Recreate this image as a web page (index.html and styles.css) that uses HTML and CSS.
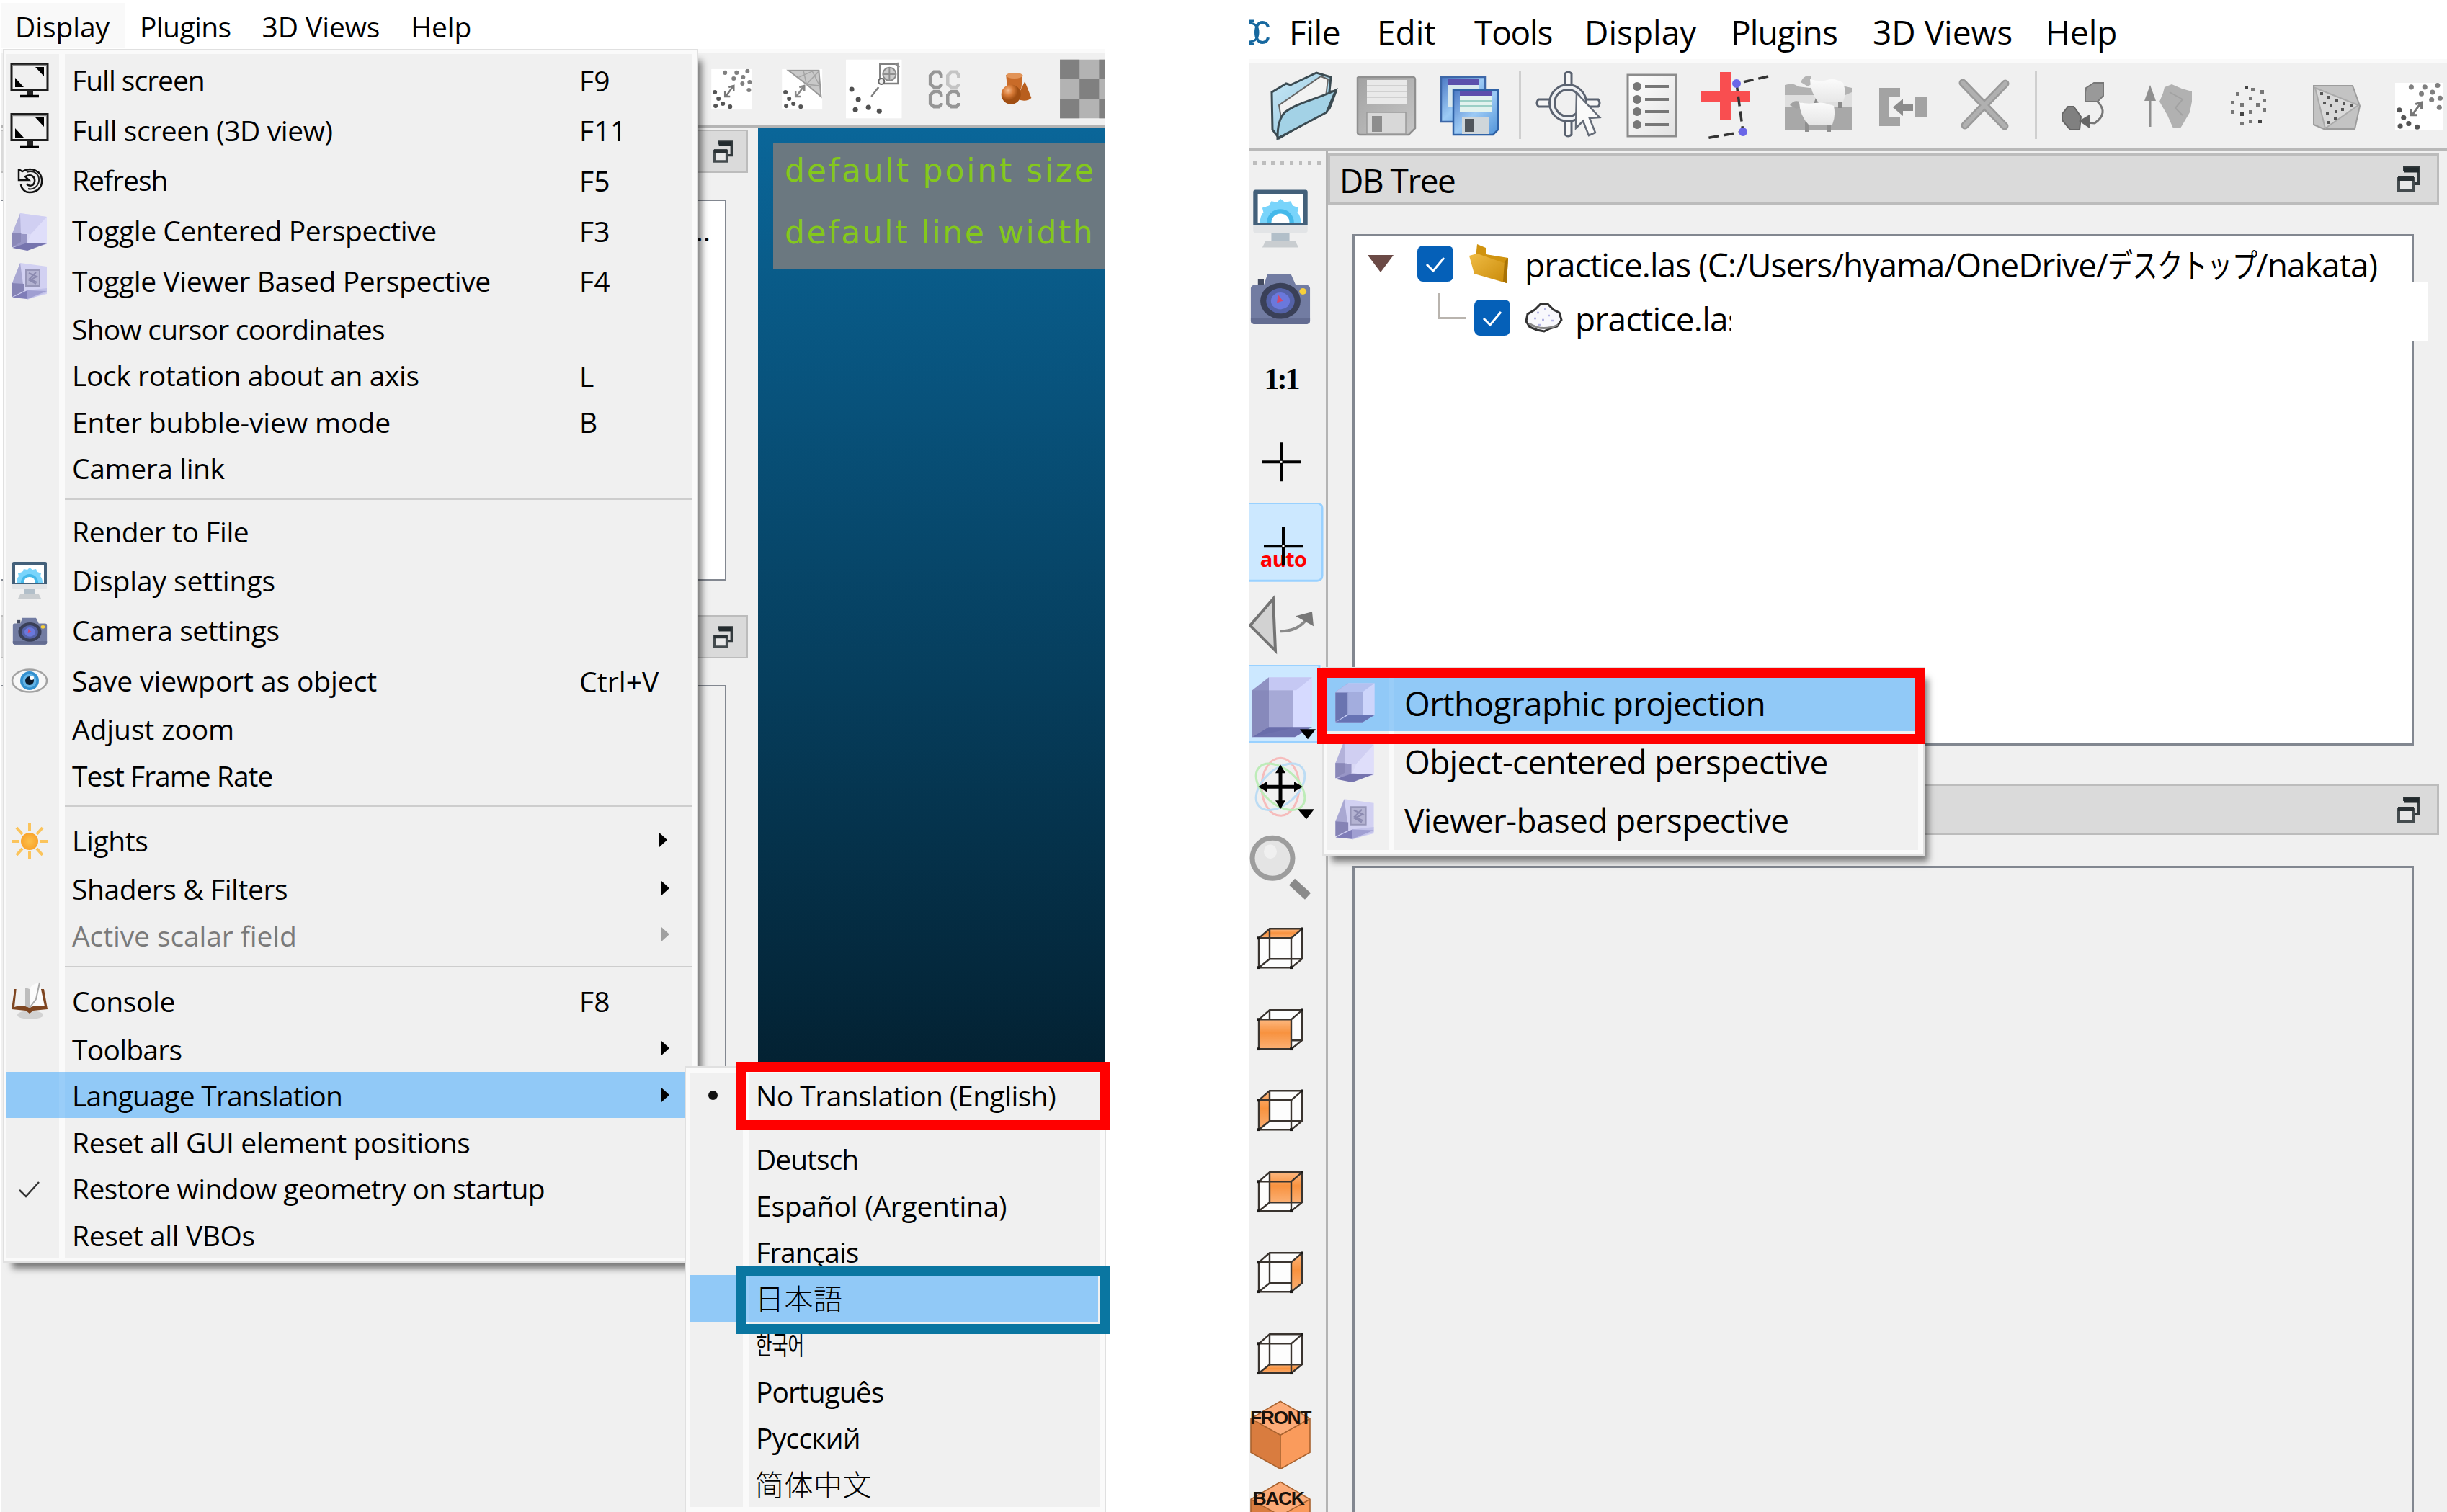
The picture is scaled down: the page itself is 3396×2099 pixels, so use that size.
FILE: index.html
```html
<!DOCTYPE html>
<html lang="en">
<head>
<meta charset="utf-8">
<title>CloudCompare</title>
<link rel="stylesheet" href="styles.css">
</head>
<body>
<svg class="defs" width="0" height="0">
  <defs>
    <linearGradient id="orange" x1="0" y1="0" x2="0" y2="1"><stop offset="0" stop-color="#fdb880"/><stop offset=".45" stop-color="#f8923f"/><stop offset="1" stop-color="#fbb074"/></linearGradient>
    <linearGradient id="greyMetal" x1="0" y1="0" x2="1" y2="1"><stop offset="0" stop-color="#a2a2a2"/><stop offset="1" stop-color="#c6c6c6"/></linearGradient>
    <linearGradient id="blueDisk" x1="0" y1="0" x2="1" y2="1"><stop offset="0" stop-color="#4a78c4"/><stop offset=".5" stop-color="#9ccaf5"/><stop offset="1" stop-color="#4f92d8"/></linearGradient>
    <linearGradient id="folderBlue" x1="0" y1="0" x2="1" y2="1"><stop offset="0" stop-color="#c8e8f6"/><stop offset="1" stop-color="#8cc1dc"/></linearGradient>
    <linearGradient id="folderGold" x1="0" y1="0" x2="1" y2="1"><stop offset="0" stop-color="#f0bc45"/><stop offset="1" stop-color="#c98a08"/></linearGradient>
    <radialGradient id="sun"><stop offset="0" stop-color="#fdc04a"/><stop offset="1" stop-color="#f9a42c"/></radialGradient>
    <radialGradient id="copper" cx=".35" cy=".3"><stop offset="0" stop-color="#f5bd90"/><stop offset=".5" stop-color="#d97c38"/><stop offset="1" stop-color="#a04e12"/></radialGradient>
    <linearGradient id="sheet" x1="0" y1="0" x2="1" y2="1"><stop offset="0" stop-color="#fff"/><stop offset="1" stop-color="#e2e2e2"/></linearGradient>
    <linearGradient id="fleece" x1="0" y1="0" x2="0" y2="1"><stop offset="0" stop-color="#fbfbfb"/><stop offset="1" stop-color="#e6e6e6"/></linearGradient>

    <symbol id="i-monitor" viewBox="0 0 56 56"><path d="M3 5.500h50v36H3z" fill="#f0f0f0" stroke="#1c1c1c" stroke-width="3"/><path d="M4.500 7.500h47" stroke="#888" stroke-width="1.500"/><path d="M36 10h12v13zM8 25l12 13H8z" fill="#000"/><path d="M24 42h9v8h-9z" fill="#222"/><path d="M15 50.500h26" stroke="#000" stroke-width="3.500"/></symbol>
    <symbol id="i-refresh" viewBox="0 0 56 56"><path d="M13 12v15h14l-5-5c8-4 14 0 13 7s-8 7-11 3" fill="none" stroke="#111" stroke-width="2.500"/><path d="M13 12l5 3c12-7 26-1 27 11s-7 18-17 18c-6 0-11-4-12-11" fill="none" stroke="#111" stroke-width="2.500"/><path d="M24 16c11-4 18 4 17 12s-8 13-15 11" fill="none" stroke="#222" stroke-width="2"/></symbol>
    <symbol id="i-cubec" viewBox="0 0 56 56"><path d="M15 3l37 5v38L25 53 4 50V31z" fill="#d9d8f5"/><path d="M15 3L4 31v19l14-9V31z" fill="#b3b2da"/><path d="M4 31l20 1 0 14-20 4z" fill="#9896c6"/><path d="M4 31l12 0 0 12-12 7z" fill="#8a88b8"/><path d="M15 3l37 5-22 24-14-1z" fill="#d0cff2"/><path d="M52 8L30 32l-6 14 28-2z" fill="#dfdefa"/><path d="M4 51l21-7 27 1-27 10z" fill="#7674ae"/></symbol>
    <symbol id="i-cubev" viewBox="0 0 56 56"><path d="M15 3l37 5v38L25 53 4 50V31z" fill="#d2d1f2"/><path d="M15 3L4 31v19l16-10z" fill="#a9a8d2"/><path d="M4 31l16 1 0 10-16 8z" fill="#8583b5"/><path d="M4 51l21-10 27 1-27 11z" fill="#7f7db8"/><path d="M25 41l27-3v6l-27 10z" fill="#b6b5e2" opacity=".6"/><path d="M23 13h19v22H23z" fill="#b4b3d2" stroke="#9796b8" stroke-width="2"/><path d="M27 17l11 5-10 5 9 5M37 16l-9 9 10 5" stroke="#8b8ab0" stroke-width="2" fill="none"/></symbol>
    <symbol id="i-cubeo" viewBox="0 0 56 56"><path d="M4 15L20 4h33v40L38 53H4z" fill="#cdd5fb"/><path d="M4 15L20 4v38L4 53z" fill="#8488bd"/><path d="M4 15h34v29H4z" fill="#9ba6d8" opacity=".85"/><path d="M4 53l16-9h33L38 53z" fill="#5c68ac" opacity=".9"/><path d="M4 15L20 4h33L38 15z" fill="#b4c0ef"/><path d="M4 16h15v27L4 52z" fill="#6a74b0"/></symbol>
    <symbol id="i-display" viewBox="0 0 56 56"><path d="M6 2h44a2 2 0 0 1 2 2v29H4V4a2 2 0 0 1 2-2z" fill="#43607a"/><path d="M8 6h40v25H8z" fill="#fff"/><path d="M10 31c0-4 1-7 3-9l-1-4 6-2 2-4 5 1 3-3 4 3 5-1 2 4 5 2-1 4c2 2 3 5 3 9z" fill="#79d4fb"/><path d="M16 31a12 12 0 0 1 24 0z" fill="#45b9ea"/><path d="M20 31a8 8 0 0 1 16 0z" fill="#fff"/><path d="M4 33h48v5a2 2 0 0 1-2 2H6a2 2 0 0 1-2-2z" fill="#e2e4e6"/><path d="M20 40h16v7H20z" fill="#b2bfc9"/><path d="M15 47h26l3 6H12z" fill="#c9cdd0"/></symbol>
    <symbol id="i-camera" viewBox="0 0 56 56" preserveAspectRatio="none"><path d="M9 10h5v6H9z" fill="#444b60"/><path d="M17 6h20l4 10h9a3 3 0 0 1 3 3v31a3 3 0 0 1-3 3H6a3 3 0 0 1-3-3V19a3 3 0 0 1 3-3h8z" fill="#727ca2"/><path d="M3 47h50v3a3 3 0 0 1-3 3H6a3 3 0 0 1-3-3z" fill="#636c91"/><circle cx="28" cy="31" r="17" fill="#3a4058"/><circle cx="28" cy="31" r="12" fill="#5462a8"/><circle cx="28" cy="31" r="8" fill="#6a78dc"/><path d="M26 25l4 6-5 2z" fill="#d3486f"/><circle cx="47" cy="22" r="3" fill="#f6cf3b"/></symbol>
    <symbol id="i-eye" viewBox="0 0 56 56"><ellipse cx="28" cy="28" rx="24" ry="15.500" fill="#f7f7f7" stroke="#a2a2a2" stroke-width="2.500"/><circle cx="28" cy="28" r="13" fill="#3390cf"/><circle cx="28" cy="28" r="9.500" fill="#62b3e6"/><circle cx="28" cy="28" r="6" fill="#0b1a2b"/><circle cx="31" cy="24" r="3" fill="#fff"/></symbol>
    <symbol id="i-sun" viewBox="0 0 56 56"><circle cx="28" cy="28" r="12" fill="url(#sun)"/><path d="M28 3v11M28 42v11M3 28h11M42 28h11M10 9l8 9M38 38l8 9M46 9l-8 9M18 38l-8 9" stroke="#fbc45c" stroke-width="4" fill="none"/></symbol>
    <symbol id="i-book" viewBox="0 0 56 56"><ellipse cx="29" cy="47" rx="18" ry="6" fill="#d2d2d2"/><path d="M7 11L3 39l20 2 5 4 5-4 20-2-5-28z" fill="#7e4520"/><path d="M10 8c6-2 13-1 18 3v26c-6-3-14-3-21-1z" fill="#f1f1f1"/><path d="M28 11v26l-6-2V9z" fill="#bdbdbd"/><path d="M28 11c2-5 8-8 14-9l7 33c-8-2-16-1-21 2z" fill="#fbfbfb"/><path d="M28 37l9-12 5-23" stroke="#a8a8a8" stroke-width="2" fill="none"/></symbol>
    <symbol id="i-check" viewBox="0 0 56 56"><path d="M14 29l9 9L41 18" fill="none" stroke="#333" stroke-width="2.500"/></symbol>
    <symbol id="i-float" viewBox="0 0 32 36"><path d="M10 6V2h20v22h-6" fill="none" stroke="#333a3d" stroke-width="4"/><path d="M9 5h21" stroke="#222a2d" stroke-width="7"/><path d="M2 17h20v17H2z" fill="#e8e8e8" stroke="#444b4e" stroke-width="4"/><path d="M1 17h22" stroke="#2a3134" stroke-width="6"/></symbol>
    <symbol id="i-c2c" viewBox="0 0 56 56"><path d="M0 0h56v56H0z" fill="#fff"/><g fill="#555"><circle cx="5" cy="32" r="3"/><circle cx="10" cy="41" r="3"/><circle cx="6" cy="51" r="3"/><circle cx="16" cy="48" r="3"/><circle cx="26" cy="52" r="3"/></g><g fill="#808080"><circle cx="19" cy="5" r="3"/><circle cx="35" cy="5" r="3"/><circle cx="50" cy="3" r="3"/><circle cx="31" cy="13" r="3"/><circle cx="44" cy="11" r="3"/><circle cx="43" cy="20" r="3"/><circle cx="53" cy="18" r="3"/><circle cx="52" cy="29" r="3"/></g><path d="M20 38l10-14M19 31v7h7M24 25l7-2 0 8" fill="none" stroke="#777" stroke-width="2.500"/></symbol>
    <symbol id="i-c2m" viewBox="0 0 56 56"><path d="M0 0h56v56H0z" fill="#fff"/><g fill="#555"><circle cx="5" cy="32" r="3"/><circle cx="10" cy="41" r="3"/><circle cx="6" cy="51" r="3"/><circle cx="16" cy="48" r="3"/><circle cx="26" cy="52" r="3"/></g><path d="M9 2h42l3 36-20-17z" fill="#c9c9c9" stroke="#999" stroke-width="2"/><path d="M22 12l20-9 10 20-18-2-4-18M34 21l18-19" fill="none" stroke="#a5a5a5" stroke-width="1.500"/><path d="M20 38l10-14M19 31v7h7M24 25l7-2 0 8" fill="none" stroke="#888" stroke-width="2.500"/></symbol>
    <symbol id="i-wire" viewBox="0 0 64 58"><path d="M2 15L18 2h44v42L46 56H2z" fill="#fdfdfd"/></symbol>
    <symbol id="i-edges" viewBox="0 0 64 58"><path d="M2 15L17 2h45v42L47 56H2zM2 15h45v41M47 15L62 2" fill="none" stroke="#3a342f" stroke-width="2.400"/><path d="M0 54h4v4H0zM45 54h4v4h-4zM60 0h4v4h-4zM0 13h4v4H0z" fill="#1c1a18"/></symbol>
    <symbol id="i-back" viewBox="0 0 64 58"><path d="M17 2v42h45M2 56l15-12" fill="none" stroke="#3a342f" stroke-width="2.400"/></symbol>
    <symbol id="i-iso" viewBox="0 0 86 96"><path d="M43 1L2 25v47l41 23 41-23V25z" fill="#fa9b5c"/><path d="M43 1L2 25l41 23 41-23z" fill="#fcab78"/><path d="M2 25v47l41 23V48z" fill="#d97c3f"/><path d="M43 1L2 25v47l41 23 41-23V25zM2 25l41 23 41-23M43 48v47" fill="none" stroke="#a8622f" stroke-width="1.600"/></symbol>
    <symbol id="i-tick" viewBox="0 0 50 50"><rect width="50" height="50" rx="8" fill="#0560b8"/><path d="M13 26l9 9 15-18" fill="none" stroke="#fff" stroke-width="3"/></symbol>
  </defs>
</svg>

<main class="page">
  <section class="window left">
    <nav class="menubar small">
      <span class="open">Display</span><span class="m-plugins">Plugins</span><span>3D Views</span><span>Help</span>
    </nav>
    <div class="toolbar narrow">
      <svg viewBox="-49 -49 98 98"><use href="#i-c2c" x="-28" y="-27" width="56" height="56"/></svg>
      <svg viewBox="-49 -49 98 98"><use href="#i-c2m" x="-28" y="-27" width="56" height="56"/></svg>
      <svg viewBox="-49 -49 98 98"><path d="M-38-40h77v81h-77z" fill="#fff"/><g fill="#505050"><circle cx="-30" cy="1" r="3.500"/><circle cx="-21" cy="15" r="3.500"/><circle cx="-25" cy="29" r="3.500"/><circle cx="-7" cy="26" r="3.500"/><circle cx="8" cy="31" r="3.500"/></g><path d="M9-34h25v27H9zM-3 11L7-2" fill="none" stroke="#808080" stroke-width="2.500"/><circle cx="22" cy="-20" r="9" fill="#ccc" stroke="#8a8a8a" stroke-width="2"/><path d="M22-29v18M13-20h18M30-34l6 4M34-36v10" stroke="#8f8f8f" stroke-width="2"/><circle cx="11" cy="-10" r="4" fill="#eee" stroke="#666" stroke-width="2"/></svg>
      <svg viewBox="-49 -49 98 98"><g fill="none" stroke="#969696" stroke-width="4.500"><path d="M-4-15v-4l-3-4h-7l-5 5v12l5 4h7l3-3v-2"/><path d="M20-15v-4l-3-4h-7l-5 5v12l5 4h7l3-3v-2" stroke="#c4c4c4"/><path d="M-4 12V8l-3-4h-7l-5 5v12l5 4h7l3-3v-2M20 12V8l-3-4h-7L5 9v12l5 4h7l3-3v-2"/></g></svg>
      <svg viewBox="-49 -49 98 98"><path d="M13-10L2 12c2 6 16 6 20 1z" fill="#b85e1e"/><path d="M-13-19l2 20H8l2-20z" fill="#c96b28"/><ellipse cx="-1.500" cy="-18" rx="11.500" ry="4" fill="#e29458"/><circle cx="-6" cy="8" r="13.500" fill="url(#copper)"/></svg>
      <svg viewBox="-49 -49 98 98"><path d="M-36-40h85v81h-85z" fill="#b3b3b3"/><path d="M-36-40h27v27h-27zM18-40h31v27H18zM-9-13h27v27H-9zM-36 14h27v27h-27zM18 14h31v27H18z" fill="#808080"/></svg>
    </div>
    <div class="split">
      <div class="docks">
        <div class="docktitle"><svg class="float"><use href="#i-float"/></svg></div>
        <div class="dockbox white"><span>..</span></div>
        <div class="docktitle"><svg class="float"><use href="#i-float"/></svg></div>
        <div class="dockbox grow"></div>
      </div>
      <div class="view3d">
        <div class="hud"><p>default point size</p><p class="second">default line width</p></div>
      </div>
    </div>

    <div class="menu main">
      <ul class="items">
        <li class="tall"><svg><use href="#i-monitor"/></svg><b class="tight">Full screen</b><kbd>F9</kbd></li>
        <li class="tall"><svg><use href="#i-monitor"/></svg><b>Full screen (3D view)</b><kbd>F11</kbd></li>
        <li class="tall"><svg><use href="#i-refresh"/></svg><b class="tight">Refresh</b><kbd>F5</kbd></li>
        <li class="tall"><svg><use href="#i-cubec"/></svg><b>Toggle Centered Perspective</b><kbd>F3</kbd></li>
        <li class="tall"><svg><use href="#i-cubev"/></svg><b>Toggle Viewer Based Perspective</b><kbd>F4</kbd></li>
        <li><b class="snug">Show cursor coordinates</b></li>
        <li><b>Lock rotation about an axis</b><kbd>L</kbd></li>
        <li><b class="loose">Enter bubble-view mode</b><kbd>B</kbd></li>
        <li><b>Camera link</b></li>
        <li class="sep"></li>
        <li><b>Render to File</b></li>
        <li class="tall"><svg><use href="#i-display"/></svg><b class="loose">Display settings</b></li>
        <li class="tall cam"><svg><use href="#i-camera"/></svg><b>Camera settings</b></li>
        <li class="tall"><svg><use href="#i-eye"/></svg><b class="loose">Save viewport as object</b><kbd>Ctrl+V</kbd></li>
        <li><b class="loose">Adjust zoom</b></li>
        <li><b class="tight">Test Frame Rate</b></li>
        <li class="sep"></li>
        <li class="tall"><svg><use href="#i-sun"/></svg><b>Lights</b><i class="arrow near"></i></li>
        <li><b>Shaders &amp; Filters</b><i class="arrow"></i></li>
        <li class="off"><b class="loose">Active scalar field</b><i class="arrow"></i></li>
        <li class="sep"></li>
        <li class="tall"><svg><use href="#i-book"/></svg><b>Console</b><kbd>F8</kbd></li>
        <li><b class="snug">Toolbars</b><i class="arrow"></i></li>
        <li class="hot"><b class="snug">Language Translation</b><i class="arrow"></i></li>
        <li><b>Reset all GUI element positions</b></li>
        <li><svg><use href="#i-check"/></svg><b class="mid">Restore window geometry on startup</b></li>
        <li><b>Reset all VBOs</b></li>
      </ul>
    </div>

    <div class="menu lang">
      <ul class="items">
        <li><i class="dot"></i><b class="mid">No Translation (English)</b></li>
        <li class="sep"></li>
        <li><b class="tight">Deutsch</b></li>
        <li><b class="mild">Español (Argentina)</b></li>
        <li><b class="tight">Français</b></li>
        <li class="hot cjk"><b>日本語</b></li>
        <li class="ko"><b>한국어</b></li>
        <li><b class="tight">Português</b></li>
        <li><b class="snug">Русский</b></li>
        <li class="cjk sc"><b>简体中文</b></li>
      </ul>
    </div>
    <div class="frame f-english"></div>
    <div class="frame f-japanese"></div>
  </section>

  <section class="window right">
    <nav class="menubar big">
      <svg class="logo" viewBox="0 0 28 40"><g fill="none" stroke="#17689f" stroke-width="4"><path d="M0 7c10 0 13 6 13 13S10 33 0 33" stroke-width="3"/><path d="M27 13c-1-5-4-7-8-7-6 0-9 6-9 14s3 14 9 14c4 0 7-2 8-7"/><path d="M0 4h8M0 36h8" stroke-width="3"/></g></svg>
      <span class="g1">File</span><span class="g2">Edit</span><span class="g3">Tools</span><span class="g4">Display</span><span class="g5">Plugins</span><span class="g6">3D Views</span><span class="g7">Help</span>
    </nav>
    <div class="toolbar wide">
      <svg viewBox="0 0 96 96"><path d="M4 30l20-12 6 2L66 3l20 6-2 20 9 0-9 24L14 94 5 82z" fill="url(#folderBlue)" stroke="#3b4b52" stroke-width="3"/><path d="M14 48L72 8l10 4-4 32-58 40z" fill="#f2f2f2" stroke="#666" stroke-width="2"/><path d="M22 58c18-14 44-18 71-31L80 58 12 94c0-16 2-27 10-36z" fill="#a3d2e6" stroke="#3b4b52" stroke-width="3"/></svg>
      <svg viewBox="0 0 96 96"><path d="M8 9h76a3 3 0 0 1 3 3v68l-9 9H10a3 3 0 0 1-3-3V10z" fill="url(#greyMetal)" stroke="#8f8f8f" stroke-width="2.500"/><path d="M20 13h56v34H20z" fill="#e9e9e9"/><path d="M20 21h56M20 29h56M20 37h56" stroke="#d0d0d0" stroke-width="2"/><path d="M20 58h54v30H20z" fill="#d8d8d8" stroke="#999" stroke-width="1.500"/><path d="M27 63h14v22H27z" fill="#8d8d8d"/></svg>
      <svg viewBox="0 0 96 96"><path d="M7 9h61v62H7z" fill="url(#blueDisk)" stroke="#3d67a8" stroke-width="2.500"/><path d="M16 11h44v9H16z" fill="#5b50ac"/><path d="M16 20h44v30H16z" fill="#d8e8ee"/><path d="M24 27h62v55l-7 7H24z" fill="url(#blueDisk)" stroke="#2f62a6" stroke-width="2.500"/><path d="M33 29h44v6H33z" fill="#5b50ac"/><path d="M33 35h44v22H33z" fill="#e3f2ee"/><path d="M33 42h44M33 49h44" stroke="#9ccfc6" stroke-width="2"/><path d="M36 64h38v24H36z" fill="#cfd6da"/><path d="M40 67h12v18H40z" fill="#50565c"/></svg>
      <hr class="vsep">
      <svg viewBox="0 0 96 96"><g fill="#f6f6f6" stroke="#5a6270" stroke-width="3"><path d="M43 4q4-4 9 0v21h-9zM43 66h9v23q-5 4-9 0zM6 40h22v10H6q-4-5 0-10zM66 40h23q4 5 0 10H66z"/></g><circle cx="47" cy="45" r="22" fill="none" stroke="#5a6270" stroke-width="10"/><circle cx="47" cy="45" r="22" fill="none" stroke="#eef0f3" stroke-width="4"/><path d="M59 31l32 34-14 1 8 20-9 4-8-20-10 10z" fill="#fafafa" stroke="#646b77" stroke-width="2.500"/></svg>
      <svg viewBox="0 0 96 96"><path d="M14 6h67v85H14z" fill="url(#sheet)" stroke="#8c8c8c" stroke-width="3"/><g fill="#777"><circle cx="27" cy="22" r="6"/><circle cx="27" cy="40" r="6"/><circle cx="27" cy="57" r="6"/><circle cx="27" cy="75" r="6"/></g><path d="M38 22h33M38 40h33M38 57h33M38 75h33" stroke="#777" stroke-width="4"/></svg>
      <svg viewBox="0 0 96 96"><path d="M26 2h15v26h26v15H41v26H26V43H0V28h26z" fill="#f94e50"/><path d="M93 8L49 18l9 67-52 9" fill="none" stroke="#333" stroke-width="3.500" stroke-dasharray="14 7"/><circle cx="49" cy="18" r="6" fill="#6a66e8"/><circle cx="58" cy="85" r="6" fill="#6a66e8"/></svg>
      <svg viewBox="0 0 96 96"><path d="M0 20q12-4 18 2l16 2 50-2 9 2v58H0z" fill="#b2b2b2"/><path d="M0 34h36l48 0 9-4v20H0z" fill="#dedede"/><path d="M0 50h93v32H0z" fill="#a8a8a8"/><path d="M22 16q5-11 14-8l2 10-6 4z" fill="#b4b4b4"/><path d="M46 38l-3 9M77 40v12" stroke="#8a8a8a" stroke-width="6"/><path d="M35 12q14 4 24 1t22 4q5 14 0 26l-34 2q-12-16-12-33z" fill="url(#fleece)"/><path d="M7 48q6-9 16-4l1 6-8 3z" fill="#a2a2a2"/><path d="M31 72v13M61 72v13" stroke="#8f8f8f" stroke-width="6"/><path d="M20 44q12 3 22 1t26 4q3 14-2 26H33q-12-12-13-31z" fill="url(#fleece)"/></svg>
      <svg viewBox="0 0 96 96"><path d="M15 24h29v13H28v27h16v13H15zM65 36h16v29H65z" fill="#a3a3a3"/><path d="M34 51l14-12v7h14v10H48v7z" fill="#8c8c8c"/></svg>
      <svg viewBox="0 0 96 96"><path d="M15 17L73 77M74 18L18 76" stroke="#9a9a9a" stroke-width="11" stroke-linecap="round"/><path d="M15 17L73 77M74 18L18 76" stroke="#b0b0b0" stroke-width="6" stroke-linecap="round"/></svg>
      <hr class="vsep two">
      <svg viewBox="0 0 96 96"><path d="M50 24l11-7h13v18l-8 8H49V30z" fill="#999" stroke="#777" stroke-width="2"/><path d="M17 60l8-10h8l10 14-2 18H28l-11-13z" fill="#808080" stroke="#666" stroke-width="2"/><path d="M66 43q16 16-4 30l-12-1" fill="none" stroke="#777" stroke-width="3"/><path d="M40 70l15-9v19z" fill="#666"/></svg>
      <svg viewBox="0 0 96 96"><path d="M23 78V30" stroke="#8f8f8f" stroke-width="3"/><path d="M15 42l8-22 8 22z" fill="#8f8f8f"/><path d="M43 23l10-4 14 6 14 4v14l-3 15-13 22H55l-8-18-11-19 5-12z" fill="#b1b1b1"/><path d="M50 30l18 10-10 12 10 10" stroke="#a2a2a2" stroke-width="2" fill="none"/></svg>
      <svg viewBox="0 0 96 96"><g fill="#777"><path d="M19 42h5v5h-5zM19 55h5v5h-5zM26 30h5v5h-5zM32 45h5v5h-5zM44 36h5v5h-5zM47 24h5v5h-5zM54 45h5v5h-5zM60 27h5v5h-5zM63 39h5v5h-5zM63 52h5v5h-5zM44 55h5v5h-5zM44 68h5v5h-5zM32 71h5v5h-5z"/><path d="M38 21h5v5h-5zM32 58h5v5h-5zM57 68h5v5h-5z" fill="#444"/></g></svg>
      <svg viewBox="0 0 96 96"><path d="M18 21h54l10 28-7 32H32l-14-6z" fill="#c3c3c3" stroke="#9c9c9c" stroke-width="2"/><path d="M20 24l60 24-46 32z" fill="#d9d9d9" stroke="#aaa" stroke-width="2"/><path d="M27 30h4v4h-4zM37 35h4v4h-4zM31 43h4v4h-4zM48 40h4v4h-4zM40 47h4v4h-4zM58 44h4v4h-4zM68 46h4v4h-4zM35 57h4v4h-4zM47 55h4v4h-4zM56 52h4v4h-4zM37 70h4v4h-4zM46 64h4v4h-4z" fill="#555"/></svg>
      <svg viewBox="0 0 96 96"><use href="#i-c2c" x="15" y="17" width="66" height="66"/></svg>
    </div>
    <div class="work">
      <aside class="sidebar">
        <svg viewBox="0 -56.300 108 112.600"><use href="#i-display" x="-2" y="-44" width="92" height="88"/></svg>
        <svg viewBox="0 -56.300 108 112.600"><use href="#i-camera" x="-2" y="-44" width="92" height="82"/></svg>
        <svg viewBox="0 -56.300 108 112.600"><text x="45" y="11" class="one">1:1</text></svg>
        <svg viewBox="0 -56.300 108 112.600"><path d="M45-27v54M18 0h54" stroke="#000" stroke-width="4"/><path d="M43.500-1.500h3v3h-3z" fill="#fff"/></svg>
        <svg viewBox="0 -56.300 108 112.600"><path d="M-4-56h99a7 7 0 0 1 7 7v94a7 7 0 0 1-7 7H-4z" fill="#cce8ff" stroke="#99d1ff" stroke-width="3"/><text x="48" y="33" class="auto">auto</text><path d="M48-23v54M21 4h54" stroke="#000" stroke-width="4"/><path d="M46.500 2.500h3v3h-3z" fill="#fff"/></svg>
        <svg viewBox="0 -56.300 108 112.600"><path d="M2 1l32-37 3 72z" fill="#d2d2d2" stroke="#747474" stroke-width="4"/><path d="M43 9c16 0 26-4 36-15" fill="none" stroke="#8a8a8a" stroke-width="4"/><path d="M65-12l23-6 2 20z" fill="#777"/></svg>
        <svg viewBox="0 -56.300 108 112.600"><path d="M-4-56H98V51H-4z" fill="#cce8ff" stroke="#99d1ff" stroke-width="3"/><path d="M5-21L28-39h60v64L66 44H5z" fill="#d6daff"/><path d="M5-21L28-39h60L66-21z" fill="#c5c8f3"/><path d="M5-21h57v52L5 44z" fill="#a6a9d6"/><path d="M5-21L28-39v70L5 44z" fill="#7c7fb2" opacity=".75"/><path d="M5 44l23-14h60L64 44z" fill="#6366a6" opacity=".9"/><path d="M71 33h22L82 47z" fill="#000"/></svg>
        <svg viewBox="0 -56.300 108 112.600"><g fill="none" stroke-width="3"><ellipse cx="44" cy="0" rx="26" ry="40" stroke="#f6bcbc"/><ellipse cx="44" cy="0" rx="40" ry="24" stroke="#bcdcf4" transform="rotate(-42 44 0)"/><ellipse cx="44" cy="0" rx="40" ry="24" stroke="#bdecb8" transform="rotate(42 44 0)"/></g><path d="M44-23v46M21 0h46" stroke="#000" stroke-width="5"/><path d="M44-31l7 12H37zM44 31l7-12H37zM13 0l12-7V7zM75 0L63-7V7z" fill="#000"/><path d="M68 31h23L80 45z" fill="#000"/></svg>
        <svg viewBox="0 -56.300 108 112.600"><path d="M60 20L82 40" stroke="#8a8a8a" stroke-width="12"/><circle cx="33" cy="-13" r="28" fill="#e4e4e4" stroke="#9d9d9d" stroke-width="7"/><ellipse cx="30" cy="-22" rx="9" ry="10" fill="#f0f0f0"/></svg>
        <svg viewBox="0 -56.300 108 112.600"><g transform="translate(12 -30)"><use href="#i-wire" width="64" height="58"/><path d="M2 15L17 2h45L47 15z" fill="url(#orange)"/><use href="#i-back" width="64" height="58"/><use href="#i-edges" width="64" height="58"/></g></svg>
        <svg viewBox="0 -56.300 108 112.600"><g transform="translate(12 -30)"><use href="#i-wire" width="64" height="58"/><use href="#i-back" width="64" height="58"/><path d="M2 15h45v41H2z" fill="url(#orange)"/><use href="#i-edges" width="64" height="58"/></g></svg>
        <svg viewBox="0 -56.300 108 112.600"><g transform="translate(12 -30)"><use href="#i-wire" width="64" height="58"/><path d="M2 15L17 2v42L2 56z" fill="url(#orange)"/><use href="#i-back" width="64" height="58"/><use href="#i-edges" width="64" height="58"/></g></svg>
        <svg viewBox="0 -56.300 108 112.600"><g transform="translate(12 -30)"><use href="#i-wire" width="64" height="58"/><path d="M17 2h45v42H17z" fill="url(#orange)"/><use href="#i-back" width="64" height="58"/><use href="#i-edges" width="64" height="58"/></g></svg>
        <svg viewBox="0 -56.300 108 112.600"><g transform="translate(12 -30)"><use href="#i-wire" width="64" height="58"/><use href="#i-back" width="64" height="58"/><path d="M47 15L62 2v42L47 56z" fill="url(#orange)"/><use href="#i-edges" width="64" height="58"/></g></svg>
        <svg viewBox="0 -56.300 108 112.600"><g transform="translate(12 -30)"><use href="#i-wire" width="64" height="58"/><path d="M2 56l15-12h45L47 56z" fill="url(#orange)"/><use href="#i-back" width="64" height="58"/><use href="#i-edges" width="64" height="58"/></g></svg>
        <svg viewBox="0 -56.300 108 112.600"><use href="#i-iso" x="1" y="-49" width="86" height="96"/><text x="44" y="-16" class="iso">FRONT</text></svg>
        <svg viewBox="0 -56.300 108 112.600"><use href="#i-iso" x="1" y="-49" width="86" height="96"/><text x="41" y="-16" class="iso">BACK</text></svg>
      </aside>
      <div class="panels">
        <div class="docktitle titled"><span>DB Tree</span><svg class="float"><use href="#i-float"/></svg></div>
        <div class="tree">
          <div class="node">
            <i class="expand"></i><svg class="cb"><use href="#i-tick"/></svg>
            <svg class="folder" viewBox="0 0 56 56"><path d="M12 1l12 5v9l31 5-2 35-45-16z" fill="#d0930f"/><path d="M1 17l11-3 40 14 1 27L8 42z" fill="url(#folderGold)"/><path d="M55 20l-2 35-5-2 2-28z" fill="#a87205"/></svg>
            <span class="label">practice.las (C:/Users/hyama/OneDrive/<span class="kana">デスクトップ</span>/nakata)</span>
          </div>
          <div class="node child">
            <i class="branch"></i><svg class="cb"><use href="#i-tick"/></svg>
            <svg class="cloud" viewBox="0 0 54 42"><path d="M15 10l8-8h10l8 8 8 4 3 10-6 9-10 3-8 4-10-2-10-4-5-8 2-10z" fill="#f8f8fc" stroke="#333" stroke-width="3"/><path d="M18 14h3M28 9h3M33 18h3M14 22h3M25 24h3M38 25h3M20 31h3" stroke="#b4b4e4" stroke-width="2.500"/><path d="M7 29q18 12 40 2" fill="none" stroke="#888" stroke-width="3"/></svg>
            <span class="label cut">practice.las</span>
          </div>
          <div class="patch"></div>
        </div>
        <div class="docktitle titled"><svg class="float"><use href="#i-float"/></svg></div>
        <div class="props"></div>
      </div>
    </div>

    <div class="menu proj">
      <ul class="items">
        <li class="hot"><svg><use href="#i-cubeo"/></svg><b>Orthographic projection</b></li>
        <li><svg><use href="#i-cubec"/></svg><b>Object-centered perspective</b></li>
        <li><svg><use href="#i-cubev"/></svg><b>Viewer-based perspective</b></li>
      </ul>
    </div>
    <div class="frame f-ortho"></div>
  </section>
</main>
</body>
</html>
```
FILE: styles.css
```css
* { box-sizing: border-box; }
body {
  margin: 0;
  background: #fff;
  color: #000;
  font-family: "Open Sans", "Noto Sans", "Noto Sans CJK JP", sans-serif;
}
ul, p { margin: 0; padding: 0; list-style: none; }
svg { display: block; flex: none; overflow: visible; }
b, kbd, i { font: inherit; }
.defs { position: absolute; }

.page {
  display: flex;
  width: 3396px;
  height: 2099px;
  overflow: hidden;
}
.window {
  position: relative;
  display: flex;
  flex-direction: column;
  flex: none;
  height: 2099px;
  background: #f0f0f0;
}
.left { width: 1532px; margin-left: 2px; }
.right { width: 1663px; margin-left: 199px; }

/* menu bars */
.menubar { display: flex; flex: none; background: #fff; white-space: nowrap; }
.small { height: 68px; font-size: 39px; line-height: 73px; letter-spacing: -.1px; }
.small span { margin-right: 43px; }
.small .open {
  width: 172px;
  height: 62px;
  margin: 4px 20px 0 0;
  padding-left: 19px;
  line-height: 65px;
  background: #f9f9f9;
}
.small .m-plugins { letter-spacing: -.6px; }
.big { height: 82px; font-size: 46px; line-height: 88px; }
.big span { flex: none; }
.logo { width: 28px; height: 40px; margin-top: 25px; }
.g1 { width: 122px; margin-left: 28px; letter-spacing: -.4px; }
.g2 { width: 135px; }
.g3 { width: 153px; letter-spacing: -1.200px; }
.g4 { width: 203px; }
.g5 { width: 197px; letter-spacing: -.9px; }
.g6 { width: 240px; }

/* tool bars */
.toolbar { display: flex; flex: none; overflow: hidden; }
.narrow {
  height: 109px;
  padding-left: 963.500px;
  border-top: 5px solid #fafafa;
  border-bottom: 4px solid #b4b4b4;
}
.narrow svg { width: 98.500px; height: 100px; }
.wide {
  height: 127px;
  padding: 10px 0 0 18px;
  border-top: 5px solid #fafafa;
  border-bottom: 3px solid #b8b8b8;
}
.wide svg { width: 96px; height: 96px; margin: 1px 10px 0; }
.vsep { flex: none; width: 3px; height: 94px; margin: 2px 8px 0 9px; border: 0; background: #cfcfcf; }
.vsep.two { margin: 2px 8px 0 9px; }

/* left window body */
.split { display: flex; flex: 1; min-height: 0; }
.docks { display: flex; flex-direction: column; width: 1050px; padding-top: 3px; }
.docktitle {
  display: flex;
  flex: none;
  align-items: center;
  justify-content: flex-end;
  background: #dadada;
  border: 3px solid #bcbcbc;
}
.docks .docktitle { width: 1036px; height: 60px; padding-right: 19px; border-width: 2px; border-left: 0; }
.float { width: 32px; height: 36px; }
.docks .float { width: 27px; height: 31px; }
.dockbox { flex: none; width: 1006px; border: 2px solid #828790; border-left: 0; }
.dockbox.white {
  height: 529px;
  margin: 37px 0 48px;
  padding: 14px 20px 0 0;
  background: #fff;
  font-size: 39px;
  text-align: right;
}
.dockbox.grow { flex: 1; margin-top: 37px; border-bottom: 0; }
.view3d { flex: 1; padding: 22px 0 0 21px; background: linear-gradient(#0a6699, #000 101%); }
.hud {
  height: 174px;
  padding: 10px 0 0 16px;
  background: #6b7880;
  color: #84c81c;
  font: 44px/56px "DejaVu Sans", sans-serif;
  letter-spacing: 2.850px;
  white-space: nowrap;
}
.hud p + p { margin-top: 30px; }
.hud .second { letter-spacing: 2.600px; }

/* pop-up menus lie over the windows */
.menu { position: absolute; background: #fafafa; border: 2px solid #e0e0e0; }
.items { background: linear-gradient(90deg, #f0f0f0 0 73px, #fafafa 73px 81px, #f0f0f0 81px); height: 100%; }
.items li {
  position: relative;
  display: flex;
  align-items: center;
  height: 64.500px;
  font-size: 39px;
  line-height: 66px;
  letter-spacing: -.4px;
  white-space: nowrap;
}
.items li.tall { height: 69.700px; line-height: 72px; }
.items li b { flex: none; padding-left: 91px; padding-top: 3px; }
.items li svg { width: 56px; height: 56px; margin: 4px -60px 0 4px; }
.items li.cam svg { width: 53px; height: 44px; margin: 2px -59px 0 6px; }
.items li .tight { letter-spacing: -1px; }
.items li .snug { letter-spacing: -.75px; }
.items li .mid { letter-spacing: -.55px; }
.items li .mild { letter-spacing: -.25px; }
.items li .loose { letter-spacing: -.1px; }
.items li kbd { position: absolute; left: 795px; top: 1px; letter-spacing: .1px; }
.items li.sep { height: 23.700px; }
.sep::after { content: ""; width: 100%; height: 2px; margin-left: 81px; background: #cdcdcd; }
.items li.hot { background: linear-gradient(90deg, #91c9f7 0 73px, #99cdf8 73px 81px, #91c9f7 81px); }
.items li.off { color: #7a7a7a; }
.arrow {
  margin-left: auto;
  margin-right: 31px;
  border: 10px solid transparent;
  border-left: 11px solid #000;
  border-right: 0;
}
.arrow.near { margin-right: 34px; }
.off .arrow { border-left-color: #a0a0a0; }

.main {
  left: 2px;
  top: 68px;
  width: 965px;
  height: 1685px;
  padding: 4.600px 7px 5px 3px;
  box-shadow: 9px 12px 9px -4px rgba(0, 0, 0, .5);
}
.lang {
  left: 948px;
  top: 1480px;
  width: 585px;
  height: 625px;
  padding: 6.500px 6px 11px 6px;
}
.lang .items li b { padding-top: 1px; }
.lang li.hot { margin-right: 3px; }
.lang li .dot { width: 13px; height: 13px; margin: 0 -38px 0 25px; border-radius: 50%; background: #111; }
.lang .items .cjk b { padding: 0 0 3px 90px; font-family: "Noto Sans CJK JP", sans-serif; font-weight: 300; font-size: 40px; line-height: 58px; letter-spacing: .5px; }
.lang .items .sc b { font-family: "Noto Sans CJK SC", sans-serif; }
.lang .items .ko b {
  font: 36px/58px "Noto Sans CJK KR", sans-serif;
  padding: 0 0 4px 91px;
  transform: scaleX(.68);
  transform-origin: 91px 50%;
}
.proj {
  left: 102px;
  top: 926px;
  width: 836px;
  height: 262px;
  padding: 6px 7px 6px 5px;
  box-shadow: 9px 12px 9px -4px rgba(0, 0, 0, .5);
}
.proj .items { background: linear-gradient(90deg, #f0f0f0 0 85px, #fafafa 85px 93px, #f0f0f0 93px); }
.proj .items li { height: 81.200px; font-size: 46px; line-height: 82px; letter-spacing: -.65px; }
.proj .items li.hot { background: linear-gradient(90deg, #91c9f7 0 85px, #99cdf8 85px 93px, #91c9f7 93px); }
.proj .items li svg { width: 62px; height: 62px; margin: 0 -69px 0 7px; }
.proj .items li b { padding-left: 107px; }

/* highlight frames */
.frame { position: absolute; border: 14px solid #f00; }
.f-english { left: 1019px; top: 1474px; width: 520px; height: 95px; }
.f-japanese { left: 1019px; top: 1757px; width: 520px; height: 95px; border-color: #0a76a1; }
.f-ortho { left: 95px; top: 927px; width: 843px; height: 106px; }

/* right window body */
.work { display: flex; flex: 1; min-height: 0; }
.sidebar {
  display: flex;
  flex-direction: column;
  flex: none;
  width: 110px;
  padding-top: 38.700px;
  overflow: hidden;
  border-right: 3px solid #b4b4b4;
  background: repeating-linear-gradient(90deg, transparent 0 6px, #bdbdbd 6px 11px, transparent 11px 12.700px) 0 14px / 102px 6px no-repeat;
}
.sidebar svg { width: 108px; height: 112.600px; overflow: hidden; }
.one { font: bold 42px "Liberation Serif", serif; text-anchor: middle; letter-spacing: -3px; }
.auto { font: bold 29px "Open Sans", sans-serif; fill: #f00; text-anchor: middle; letter-spacing: -.7px; }
.iso { font: bold 26.500px "Liberation Sans", sans-serif; fill: #1a120c; text-anchor: middle; letter-spacing: -1.400px; }
.panels { display: flex; flex-direction: column; flex: 1; padding-top: 4px; }
.titled { width: 1542px; height: 71px; padding: 0 23px 0 13px; font-size: 46px; letter-spacing: -1.500px; }
.titled span { margin-right: auto; margin-top: 3px; }
.tree {
  position: relative;
  flex: none;
  width: 1473px;
  height: 710px;
  margin: 41px 0 53px 34px;
  padding: 0 18px;
  border: 3px solid #828790;
  background: #fff;
}
.node { display: flex; align-items: center; height: 75px; padding-top: 1px; }
.expand { border: 18px solid transparent; border-top: 24px solid #6b4a46; border-bottom: 0; }
.cb { width: 50px; height: 50px; margin-left: 33px; }
.folder { width: 56px; height: 56px; margin: 0 22px 0 21px; }
.label { flex: none; height: 70px; font-size: 46px; line-height: 73px; letter-spacing: -.95px; white-space: nowrap; }
.kana { display: inline-block; width: 206px; transform: scaleX(.76); transform-origin: 0 0; letter-spacing: -.5px; }
.node.child { padding-left: 98px; }
.branch { width: 39px; height: 36px; margin-top: -33px; border-left: 3px solid #b9b4ae; border-bottom: 3px solid #b9b4ae; }
.child .cb { margin-left: 11px; }
.cloud { width: 54px; height: 42px; margin: 0 17px 0 19px; }
.cut { width: 217px; overflow: hidden; line-height: 72px; letter-spacing: -.7px; }
.patch { position: absolute; left: 525px; top: 64px; width: 964px; height: 81px; background: #fff; }
.props { flex: 1; width: 1473px; margin: 43px 0 0 34px; border: 3px solid #828790; border-bottom: 0; }
```
